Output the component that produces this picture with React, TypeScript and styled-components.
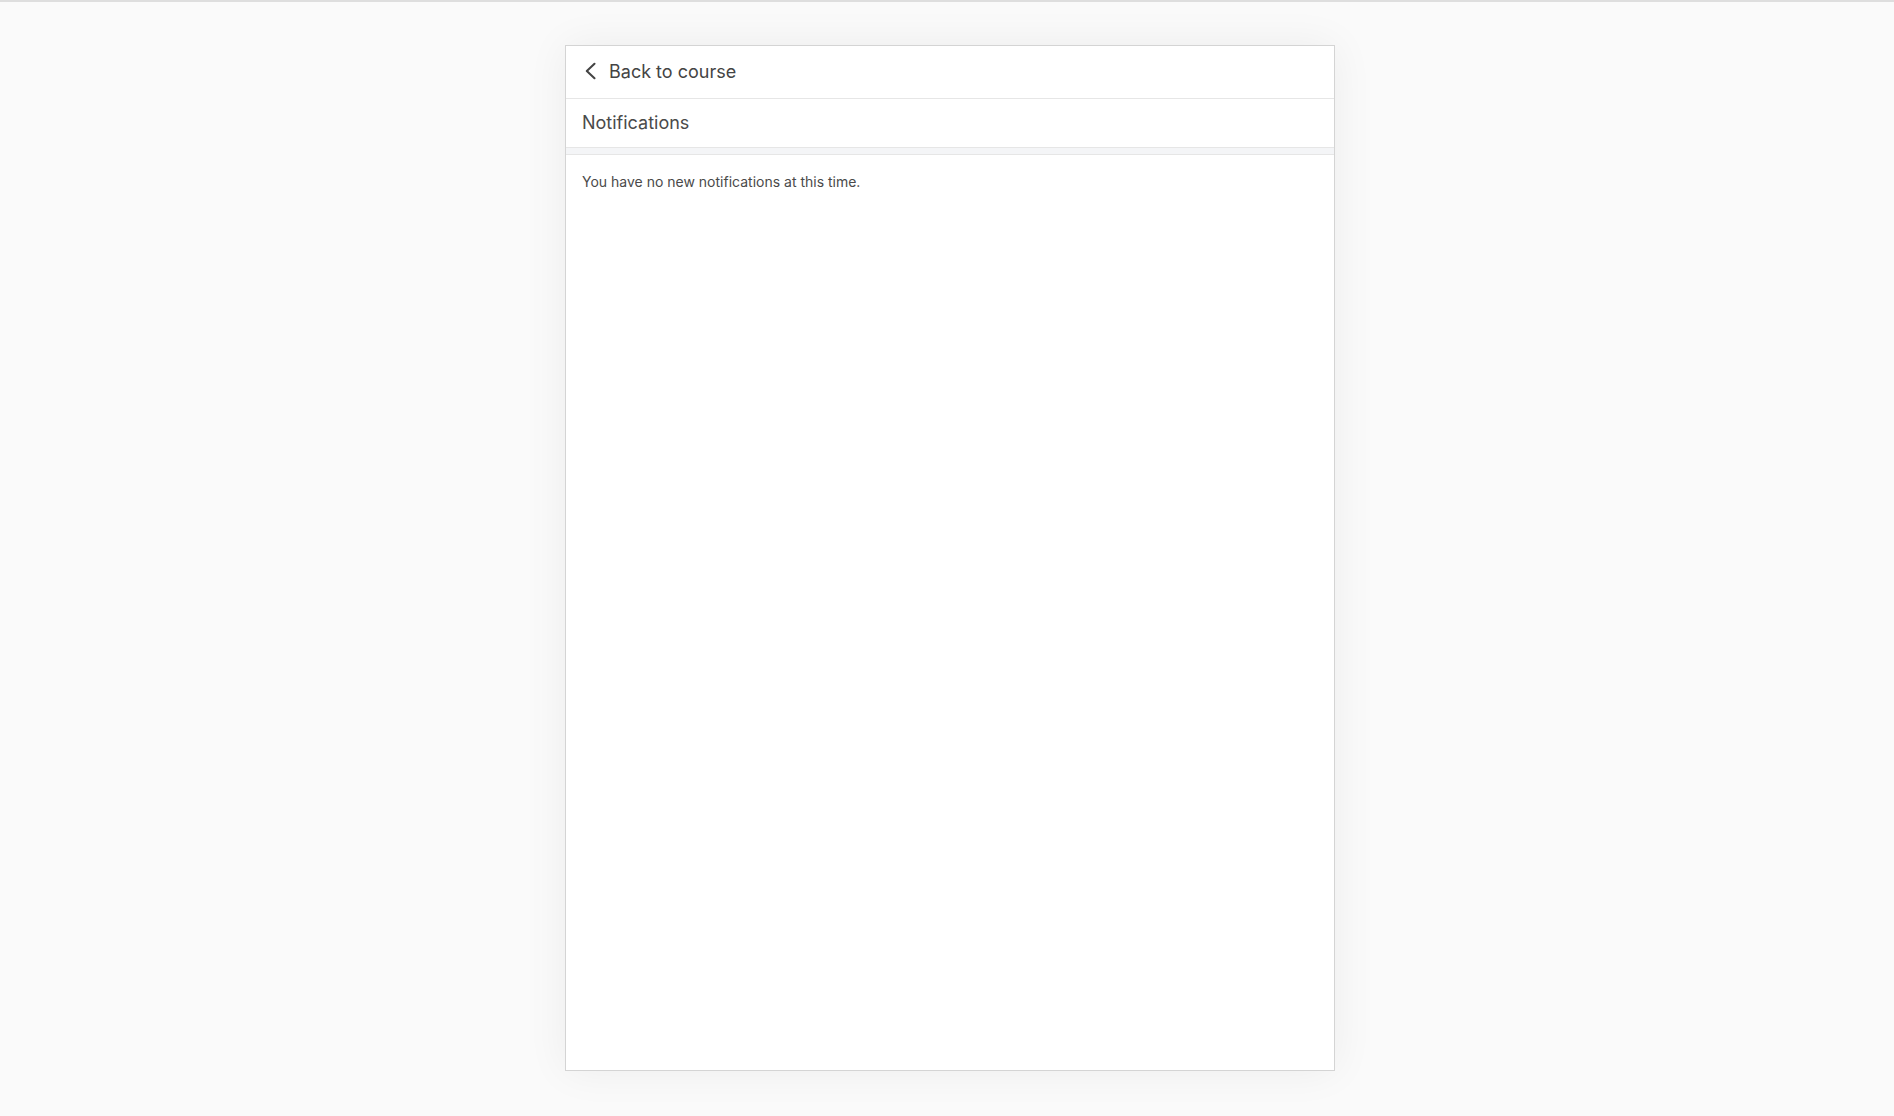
import React from "react";
import styled, { createGlobalStyle } from "styled-components";

const Global = createGlobalStyle`
  html, body { margin: 0; padding: 0; }
  body {
    background: #fafafa;
    font-family: Inter, "Noto Sans", "Liberation Sans", sans-serif;
    color: #444;
  }
`;

const Page = styled.div`
  min-height: 1116px;
  box-sizing: border-box;
  border-top: 2px solid #dedede;
  display: flex;
  justify-content: center;
  padding: 43px 0 45px 6px;
`;

const Panel = styled.section`
  width: 770px;
  height: 1026px;
  box-sizing: border-box;
  background: #fff;
  border: 1px solid #d4d4d4;
  box-shadow: 0 0 40px rgba(0, 0, 0, 0.06);
  display: flex;
  flex-direction: column;
`;

const BackBar = styled.a`
  display: flex;
  align-items: center;
  gap: 12px;
  height: 50px;
  padding: 0 17px 2px;
  border-bottom: 1px solid #e6e6e6;
  color: #444;
  font-size: 18px;
  text-decoration: none;
  cursor: pointer;
`;

const Title = styled.h1`
  margin: 0;
  height: 46px;
  display: flex;
  align-items: center;
  padding: 0 16px 2px;
  font-size: 18px;
  font-weight: 400;
  color: #4a4a4a;
  border-bottom: 1px solid #e6e6e6;
`;

const Divider = styled.div`
  height: 6px;
  background: #f4f5f7;
  border-bottom: 1px solid #e6e6e6;
`;

const Empty = styled.p`
  margin: 0;
  padding: 18px 16px;
  font-size: 14px;
  color: #4a4a4a;
`;

const Chevron = () => (
  <svg width="14" height="18" viewBox="0 0 14 18" fill="none">
    <path d="M11.5 1.8 L3.8 9 L11.5 16.2" stroke="#444" strokeWidth="2.1" strokeLinecap="round" strokeLinejoin="round" />
  </svg>
);

export default function App() {
  return (
    <>
      <Global />
      <Page>
        <Panel>
          <BackBar>
            <Chevron />
            Back to course
          </BackBar>
          <Title>Notifications</Title>
          <Divider />
          <Empty>You have no new notifications at this time.</Empty>
        </Panel>
      </Page>
    </>
  );
}
